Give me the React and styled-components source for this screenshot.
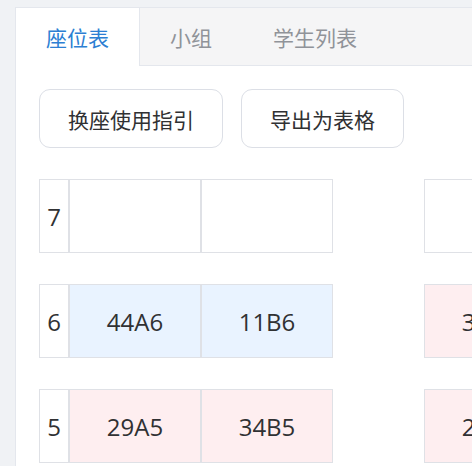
import React, { useState } from 'react';
import styled, { createGlobalStyle } from 'styled-components';

const GlobalStyle = createGlobalStyle`
  html, body {
    margin: 0;
    padding: 0;
    background: #f0f2f5;
    overflow: hidden;
  }
  body {
    font-family: "Open Sans", "Noto Sans CJK SC", sans-serif;
    color: #303133;
  }
`;

const Page = styled.div`
  padding: 7px 0 0 15px;
`;

const Card = styled.div`
  width: 960px;
  min-height: 520px;
  background: #fff;
  border: 1px solid #e4e7ed;
  box-sizing: border-box;
`;

const TabBar = styled.div`
  display: flex;
  height: 58px;
  background: #f5f5f6;
  border-bottom: 1px solid #e4e7ed;
  box-sizing: border-box;
`;

const Tab = styled.div`
  display: flex;
  align-items: center;
  padding: 0 30px;
  margin-bottom: -1px;
  font-size: 21px;
  font-family: "Noto Sans CJK SC", sans-serif;
  cursor: pointer;
  color: ${p => (p.$active ? '#2d7fd3' : '#909399')};
  background: ${p => (p.$active ? '#fff' : 'transparent')};
  border-right: 1px solid ${p => (p.$active ? '#e4e7ed' : 'transparent')};
`;

const Body = styled.div`
  padding: 23px 23px;
`;

const Toolbar = styled.div`
  display: flex;
  gap: 18px;
  margin-bottom: 31px;
`;

const Button = styled.button`
  height: 59px;
  padding: 0 28px;
  font-size: 21px;
  font-family: "Noto Sans CJK SC", sans-serif;
  color: #303133;
  background: #fff;
  border: 1px solid #dcdfe6;
  border-radius: 11px;
  cursor: pointer;
`;

const Rows = styled.div`
  display: flex;
  flex-direction: column;
  gap: 31px;
`;

const Row = styled.div`
  display: flex;
  gap: 91px;
`;

const Group = styled.div`
  display: flex;
`;

const Cell = styled.div`
  height: 74px;
  box-sizing: border-box;
  border: 1px solid #dfe1e6;
  display: flex;
  align-items: center;
  justify-content: center;
  font-size: 24px;
  flex-shrink: 0;
`;

const NumCell = styled(Cell)`
  width: 30px;
  background: #fff;
`;

const colors = { blue: '#e9f3ff', pink: '#feeef0', none: '#fff' };

const Seat = styled(Cell)`
  width: 132px;
  background: ${p => colors[p.$tone]};
`;

const rows = [
  { n: 7, left: ['', ''], tone: 'none', right: ['', ''], rtone: 'none' },
  { n: 6, left: ['44A6', '11B6'], tone: 'blue', right: ['37C6', '18D6'], rtone: 'pink' },
  { n: 5, left: ['29A5', '34B5'], tone: 'pink', right: ['26C5', '40D5'], rtone: 'pink' },
];

export default function App() {
  const [tab, setTab] = useState(0);
  const tabs = ['座位表', '小组', '学生列表'];
  return (
    <Page>
      <GlobalStyle />
      <Card>
        <TabBar>
          {tabs.map((t, i) => (
            <Tab key={t} $active={tab === i} onClick={() => setTab(i)}>
              {t}
            </Tab>
          ))}
        </TabBar>
        <Body>
          <Toolbar>
            <Button>换座使用指引</Button>
            <Button>导出为表格</Button>
          </Toolbar>
          <Rows>
            {rows.map(r => (
              <Row key={r.n}>
                <Group>
                  <NumCell>{r.n}</NumCell>
                  {r.left.map((s, i) => (
                    <Seat key={i} $tone={r.tone}>{s}</Seat>
                  ))}
                </Group>
                <Group>
                  {r.right.map((s, i) => (
                    <Seat key={i} $tone={r.rtone}>{s}</Seat>
                  ))}
                </Group>
              </Row>
            ))}
          </Rows>
        </Body>
      </Card>
    </Page>
  );
}
